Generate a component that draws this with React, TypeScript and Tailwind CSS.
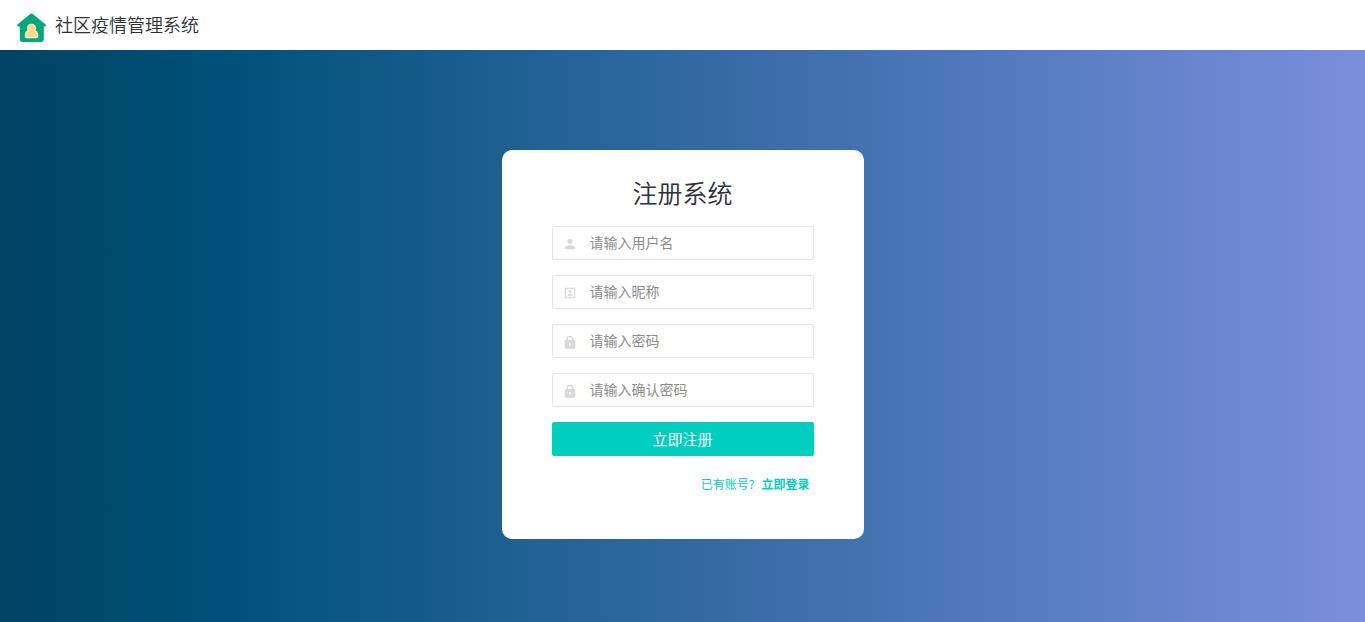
import { useState } from "react";
import type { ReactNode } from "react";

type FieldName = "username" | "nickname" | "password" | "confirm";

interface FieldProps {
    id: FieldName;
    type?: "text" | "password";
    placeholder: string;
    icon: ReactNode;
    value: string;
    onChange: (id: FieldName, value: string) => void;
}

function LogoIcon() {
    return (
        <svg viewBox="0 0 32 32" className="size-8" aria-hidden="true">
            <path
                d="M13.600 2.500a2.800 2.800 0 0 1 3.800 0L29.300 12.300c1.200 1 .7 2.200-.7 2.200H27.800v13.100a2.400 2.400 0 0 1-2.400 2.400H6.200a2.400 2.400 0 0 1-2.400-2.400V14.500H2.400c-1.400 0-1.900-1.200-.7-2.200z"
                fill="#04a777"
            />
            <path
                d="M15.500 12.200a4 4 0 0 0-4 4c0 1 .3 1.800.8 2.500-1.800.8-2.900 2.500-2.900 4.500v1c0 .8.5 1.300 1.300 1.300h9.600c.8 0 1.300-.5 1.300-1.300v-1c0-2-1.100-3.700-2.900-4.500.5-.7.8-1.500.8-2.500a4 4 0 0 0-4-4z"
                fill="#fed98b"
                stroke="#fdf1cf"
                strokeWidth="1.300"
            />
        </svg>
    );
}

function UserIcon() {
    return (
        <svg viewBox="0 0 24 24" fill="currentColor" className="size-4" aria-hidden="true">
            <path d="M12 12c2.210 0 4-1.790 4-4s-1.790-4-4-4-4 1.790-4 4 1.790 4 4 4zm0 2c-2.670 0-8 1.340-8 4v2h16v-2c0-2.660-5.330-4-8-4z" />
        </svg>
    );
}

function PortraitIcon() {
    return (
        <svg viewBox="0 0 24 24" fill="currentColor" className="size-4" aria-hidden="true">
            <path d="M20 4H4v16h16zm-2 2v12H6V6z" fillRule="evenodd" />
            <path d="M12 12c1.240 0 2.250-1.010 2.250-2.250S13.240 7.500 12 7.500s-2.250 1.010-2.250 2.250S10.760 12 12 12zm4 4.250c0-1.800-2.500-2.750-4-2.750s-4 .95-4 2.750V17h8z" />
        </svg>
    );
}

function LockIcon() {
    return (
        <svg viewBox="0 0 24 24" fill="currentColor" className="size-4" aria-hidden="true">
            <path d="M18 9h-1V7.500a5 5 0 0 0-10 0V9H6c-1.100 0-2 .9-2 2v9c0 1.100.9 2 2 2h12c1.100 0 2-.9 2-2v-9c0-1.100-.9-2-2-2zm-6 8a1.600 1.600 0 1 1 0-3.200 1.600 1.600 0 0 1 0 3.200zm3-8H9V7.500a3 3 0 0 1 6 0z" />
        </svg>
    );
}

function Field({ id, type = "text", placeholder, icon, value, onChange }: FieldProps) {
    return (
        <div className="flex h-[34px] items-center rounded-xs border border-[#e6e6e6] bg-white focus-within:border-[#00cfc0]">
            <label htmlFor={id} aria-label={placeholder} className="flex w-[37px] shrink-0 pt-0.5 pl-[9px] text-[#dadada]">
                {icon}
            </label>
            <input
                id={id}
                name={id}
                type={type}
                value={value}
                onChange={(e) => onChange(id, e.target.value)}
                placeholder={placeholder}
                className="h-full w-full min-w-0 bg-transparent pb-0.5 text-sm text-[#333] outline-none placeholder:text-[#8c8c8c]"
            />
        </div>
    );
}

export default function App() {
    const [form, setForm] = useState({ username: "", nickname: "", password: "", confirm: "" });

    const set = (id: FieldName, value: string) => setForm({ ...form, [id]: value });

    return (
        <div className="flex min-h-screen flex-col font-['Noto_Sans_CJK_SC',sans-serif] text-[#2b3238]">
            <header className="flex h-[50px] items-center gap-[7px] bg-white px-4 pb-0.5">
                <div className="pt-2">
                    <LogoIcon />
                </div>
                <span className="text-lg font-[350]">社区疫情管理系统</span>
            </header>

            <main className="flex flex-1 items-start justify-center bg-[linear-gradient(to_right,#004363,#00517a_17%,#346aa4_52%,#557bc0_75%,#7b8fdc)] py-[100px] max-sm:px-4">
                <form
                    onSubmit={(e) => e.preventDefault()}
                    className="w-full max-w-[362px] rounded-[10px] bg-white px-[50px] pt-[22px] pb-[45px]"
                >
                    <h1 className="mb-3.5 text-center text-[25px] leading-10 font-[350]">注册系统</h1>

                    <div className="flex flex-col gap-[15px]">
                        <Field id="username" placeholder="请输入用户名" icon={<UserIcon />} value={form.username} onChange={set} />
                        <Field id="nickname" placeholder="请输入昵称" icon={<PortraitIcon />} value={form.nickname} onChange={set} />
                        <Field id="password" type="password" placeholder="请输入密码" icon={<LockIcon />} value={form.password} onChange={set} />
                        <Field id="confirm" type="password" placeholder="请输入确认密码" icon={<LockIcon />} value={form.confirm} onChange={set} />
                        <button type="submit" className="h-[34px] cursor-pointer rounded-xs bg-[#00cfc0] text-[15px] text-white">
                            立即注册
                        </button>
                    </div>

                    <p className="mt-[18px] flex justify-end gap-[7px] pr-1 text-xs leading-5 text-[#00cfc0]">
                        已有账号?
                        <a href="#login" className="font-bold">
                            立即登录
                        </a>
                    </p>
                </form>
            </main>
        </div>
    );
}
